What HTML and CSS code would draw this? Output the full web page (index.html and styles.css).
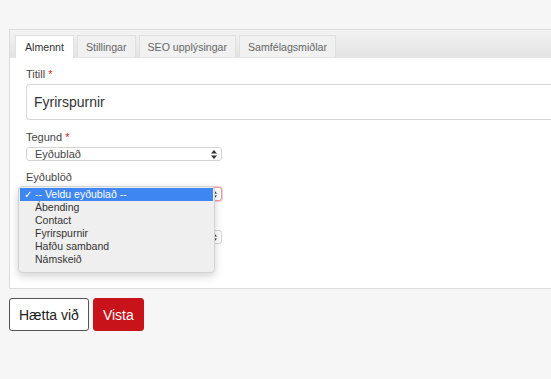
FILE: index.html
```html
<!DOCTYPE html>
<html lang="is">
<head>
    <meta charset="UTF-8">
    <title>Eyðublað</title>
    <link rel="stylesheet" href="styles.css">
</head>
<body>
    <div class="page">
        <div class="panel">
            <ul class="tabs">
                <li class="tab active">Almennt</li>
                <li class="tab">Stillingar</li>
                <li class="tab">SEO upplýsingar</li>
                <li class="tab">Samfélagsmiðlar</li>
            </ul>
            <div class="panel-body">
                <label class="field-label">Titill <span class="req">*</span></label>
                <div class="text-input">Fyrirspurnir</div>

                <label class="field-label">Tegund <span class="req">*</span></label>
                <div class="select">
                    <span>Eyðublað</span>
                    <svg class="arrows" width="6" height="9" viewBox="0 0 6 9"><path d="M3 0 L6 3.5 H0 Z M3 9 L0 5.5 H6 Z" fill="#333"/></svg>
                </div>

                <label class="field-label">Eyðublöð</label>
                <div class="select-wrap">
                    <div class="select focused">
                        <span>-- Veldu eyðublað --</span>
                        <svg class="arrows" width="6" height="9" viewBox="0 0 6 9"><path d="M3 0 L6 3.5 H0 Z M3 9 L0 5.5 H6 Z" fill="#333"/></svg>
                    </div>
                    <ul class="dropdown">
                        <li class="option selected"><span class="check">✓</span>-- Veldu eyðublað --</li>
                        <li class="option">Ábending</li>
                        <li class="option">Contact</li>
                        <li class="option">Fyrirspurnir</li>
                        <li class="option">Hafðu samband</li>
                        <li class="option">Námskeið</li>
                    </ul>
                </div>

                <label class="field-label">Síða</label>
                <div class="select last">
                    <span></span>
                    <svg class="arrows" width="6" height="9" viewBox="0 0 6 9"><path d="M3 0 L6 3.5 H0 Z M3 9 L0 5.5 H6 Z" fill="#333"/></svg>
                </div>
            </div>
        </div>

        <div class="actions">
            <button class="btn btn-cancel">Hætta við</button>
            <button class="btn btn-save">Vista</button>
        </div>
    </div>
</body>
</html>
```

FILE: styles.css
```css
body {
    margin: 0;
    background: #f6f6f6;
    font-family: "Liberation Sans", Arial, sans-serif;
    color: #333;
    overflow: hidden;
}
.page {
    padding: 29px 0 0 9px;
}
.panel {
    border: 1px solid #dcdcdc;
    border-right: none;
    background: #fff;
    margin-right: -20px;
}
.tabs {
    display: flex;
    gap: 3px;
    list-style: none;
    margin: 0;
    padding: 5px 0 0 5px;
    height: 22px;
    background: linear-gradient(#f3f3f3, #e3e3e3);
    border-bottom: 1px solid #e6e6e6;
}
.tab {
    height: 22px;
    line-height: 22px;
    padding: 0 8px;
    font-size: 10.6px;
    color: #666;
    background: #f1f1f1;
    border: 1px solid #e0e0e0;
    border-bottom: none;
    box-sizing: border-box;
}
.tab.active {
    background: #fff;
    color: #333;
    height: 23px;
    padding: 0 9px;
}
.panel-body {
    padding: 9px 0 35px 16px;
}
.field-label {
    display: block;
    font-size: 11px;
    line-height: 14px;
    color: #444;
    margin-bottom: 3px;
}
.req {
    color: #d0262b;
}
.text-input {
    height: 36px;
    box-sizing: border-box;
    border: 1px solid #d6d6d6;
    border-right: none;
    border-radius: 4px 0 0 4px;
    padding: 0 7px;
    font-size: 14px;
    line-height: 34px;
    color: #333;
    margin: 1px 0 10px;
}
.select {
    width: 196px;
    height: 14px;
    box-sizing: border-box;
    border: 1px solid #d4d4d4;
    border-radius: 3px;
    display: flex;
    align-items: center;
    justify-content: space-between;
    padding: 0 4px 0 8px;
    font-size: 11px;
    color: #444;
    margin-bottom: 9px;
    background: #fff;
}
.select.focused {
    border-color: #e8a0a3;
    box-shadow: 0 0 0 1px #f4cdd0;
}
.select-wrap {
    position: relative;
    margin-bottom: 12px;
}
.select-wrap .select {
    margin-bottom: 0;
}
.dropdown {
    position: absolute;
    top: -1px;
    left: -8px;
    width: 197px;
    margin: 0;
    padding: 1px 1px 6px;
    box-sizing: border-box;
    list-style: none;
    background: #efefef;
    border: 1px solid #d2d2d2;
    border-radius: 4px;
    box-shadow: 0 3px 8px rgba(0, 0, 0, 0.18);
    font-size: 10.5px;
}
.option {
    height: 13px;
    line-height: 13px;
    padding-left: 15px;
    color: #333;
    position: relative;
}
.option.selected {
    background: #3e86f2;
    color: #fff;
}
.check {
    position: absolute;
    left: 4px;
    font-size: 10px;
}
.actions {
    display: flex;
    gap: 4px;
    margin-top: 9px;
}
.btn {
    height: 33px;
    border-radius: 3px;
    font-family: "Liberation Sans", Arial, sans-serif;
    font-size: 14px;
    padding: 0 9px;
    cursor: pointer;
}
.btn-cancel {
    background: #fff;
    border: 1px solid #555;
    color: #222;
}
.btn-save {
    background: #c8131b;
    border: 1px solid #c8131b;
    color: #fff;
}
```
